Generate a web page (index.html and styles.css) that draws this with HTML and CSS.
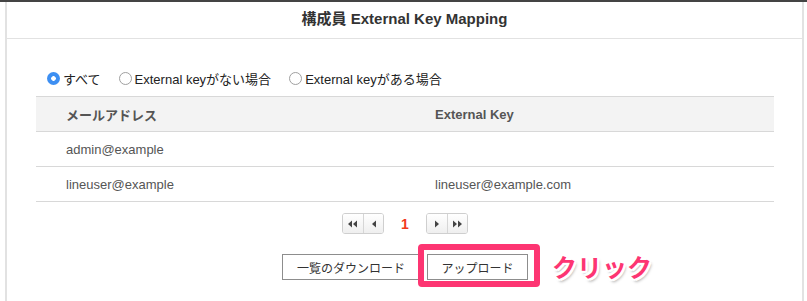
FILE: index.html
```html
<!DOCTYPE html>
<html lang="ja">
<head>
  <meta charset="UTF-8">
  <title>構成員 External Key Mapping</title>
  <link rel="stylesheet" href="styles.css">
</head>
<body>
  <div class="topbar"></div>
  <div class="panel">
    <div class="panel-header">構成員 External Key Mapping</div>
    <div class="panel-body">
      <div class="filters">
        <label class="radio"><span class="dot checked"></span>すべて</label>
        <label class="radio"><span class="dot"></span>External keyがない場合</label>
        <label class="radio"><span class="dot"></span>External keyがある場合</label>
      </div>

      <table class="mapping">
        <thead>
          <tr><th>メールアドレス</th><th>External Key</th></tr>
        </thead>
        <tbody>
          <tr><td>admin@example</td><td></td></tr>
          <tr><td>lineuser@example</td><td>lineuser@example.com</td></tr>
        </tbody>
      </table>

      <div class="pager">
        <div class="pager-group">
          <button class="pg"><svg viewBox="0 0 10 8"><path d="M0 4 4 0.5v7zM5 4 9 0.5v7z"/></svg></button>
          <button class="pg"><svg viewBox="0 0 10 8"><path d="M3 4 7 0.5v7z"/></svg></button>
        </div>
        <span class="page-current">1</span>
        <div class="pager-group">
          <button class="pg"><svg viewBox="0 0 10 8"><path d="M7 4 3 0.5v7z"/></svg></button>
          <button class="pg"><svg viewBox="0 0 10 8"><path d="M5 4 1 0.5v7zM10 4 6 0.5v7z"/></svg></button>
        </div>
      </div>

      <div class="actions">
        <button class="btn">一覧のダウンロード</button>
        <span class="highlight">
          <button class="btn">アップロード</button>
          <span class="click-note">クリック</span>
        </span>
      </div>
    </div>
  </div>
</body>
</html>
```

FILE: styles.css
```css
body {
  margin: 0;
  background: #fff;
  font-family: "Liberation Sans", "Noto Sans CJK JP", sans-serif;
  font-size: 13px;
  color: #333;
}
.topbar {
  height: 2px;
  background: #444;
}
.panel {
  margin: 0 3px 0 5px;
  border-left: 2px solid #e2e2e2;
  border-right: 2px solid #e2e2e2;
  height: 299px;
  box-sizing: border-box;
}
.panel-header {
  height: 36px;
  line-height: 34px;
  text-align: center;
  font-weight: bold;
  font-size: 15px;
  color: #333;
  border-bottom: 1px solid #e2e2e2;
}
.panel-body {
  padding: 31px 28px 0 29px;
}
.filters {
  display: flex;
  align-items: center;
  gap: 18px;
  padding-left: 11px;
  height: 16px;
  margin-bottom: 10px;
}
.radio {
  display: flex;
  align-items: center;
  gap: 3px;
  color: #222;
}
.dot {
  flex: none;
  box-sizing: border-box;
  width: 13px;
  height: 13px;
  border-radius: 50%;
  border: 1px solid #a0a0a0;
  background: #fff;
}
.dot.checked {
  border: none;
  background: radial-gradient(circle, #fff 0 2px, #3d8ff2 2.6px);
}
.mapping {
  width: 100%;
  border-collapse: collapse;
}
.mapping th,
.mapping td {
  height: 34px;
  padding: 0 0 0 30px;
  text-align: left;
  width: 50%;
  border-bottom: 1px solid #d8d8d8;
  color: #555;
}
.mapping th {
  background: #f3f3f3;
  border-top: 1px solid #d8d8d8;
  font-weight: bold;
}
.pager {
  display: flex;
  justify-content: center;
  align-items: center;
  gap: 17px;
  margin-top: 11px;
}
.pager-group {
  display: flex;
  border: 1px solid #cfcfcf;
  border-radius: 3px;
  overflow: hidden;
}
.pg {
  width: 20px;
  height: 19px;
  padding: 0;
  border: none;
  background: linear-gradient(#fff, #efefef);
  display: flex;
  align-items: center;
  justify-content: center;
}
.pg + .pg {
  border-left: 1px solid #d6d6d6;
}
.pg svg {
  width: 10px;
  height: 8px;
  fill: #444;
}
.page-current {
  color: #f23a1c;
  font-weight: bold;
  font-size: 14px;
}
.actions {
  display: flex;
  justify-content: center;
  gap: 7px;
  margin-top: 20px;
}
.btn {
  height: 26px;
  padding: 0;
  white-space: nowrap;
  border: 1px solid #8d8d8d;
  border-radius: 0;
  background: #fff;
  font-family: "Liberation Sans", "Noto Sans CJK JP", sans-serif;
  font-size: 12px;
  color: #333;
}
.actions > .btn {
  width: 138px;
}
.highlight .btn {
  width: 101px;
}
.highlight {
  position: relative;
  display: flex;
}
.highlight::after {
  content: "";
  position: absolute;
  left: -9px;
  right: -12px;
  top: -10px;
  bottom: -7px;
  border: 6px solid #fd3572;
  border-radius: 4px;
}
.click-note {
  position: absolute;
  left: calc(100% + 24px);
  top: -6px;
  white-space: nowrap;
  font-size: 25px;
  font-weight: bold;
  color: #fd3572;
  text-shadow: -2px 0 #fff, 2px 0 #fff, 0 -2px #fff, 0 2px #fff,
    -2px -2px #fff, 2px 2px #fff, -2px 2px #fff, 2px -2px #fff,
    2px 3px 3px rgba(0, 0, 0, 0.35);
}
```
